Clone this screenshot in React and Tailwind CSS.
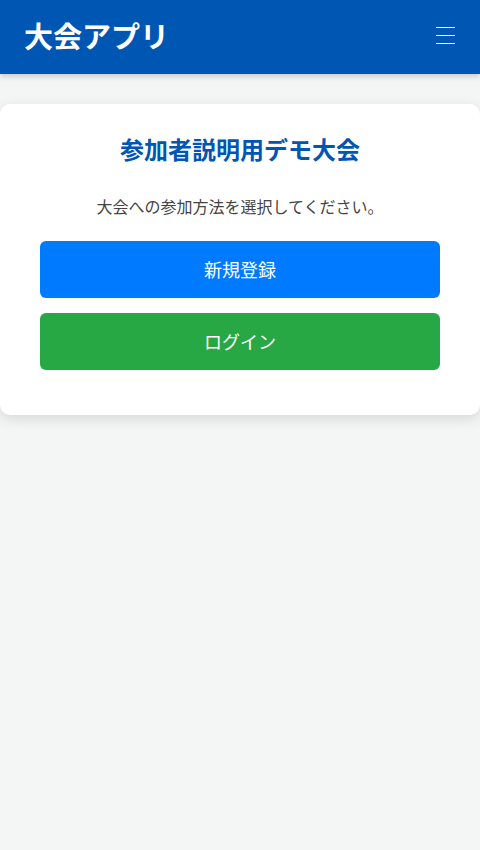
import React from "react";

const App = () => {
  return (
    <div
      className="min-h-[850px] bg-[#f4f5f5]"
      style={{ fontFamily: '"Noto Sans CJK JP", "Noto Sans", sans-serif' }}
    >
      <header className="h-[74px] bg-[#0056b3] flex items-center justify-between pl-6 pr-[25px] pb-[4px] shadow-[0_2px_6px_rgba(0,0,0,0.2)]">
        <h1 className="text-[29px] font-bold text-white leading-none">大会アプリ</h1>
        <button className="flex flex-col gap-[7px] w-[19px]">
          <span className="block h-px bg-white" />
          <span className="block h-px bg-white" />
          <span className="block h-px bg-white" />
        </button>
      </header>

      <main className="pt-[30px]">
        <div className="bg-white rounded-[10px] shadow-[0_4px_14px_rgba(0,0,0,0.12)] px-10 pt-[28px] pb-[45px]">
          <h2 className="text-center text-[24px] font-bold text-[#0056b3] leading-[34px]">
            参加者説明用デモ大会
          </h2>
          <p className="text-center text-[16px] text-[#444] mt-[28px] leading-[24px]">
            大会への参加方法を選択してください。
          </p>
          <div className="mt-[23px] flex flex-col gap-[15px]">
            <button className="h-[57px] rounded-md bg-[#007bff] text-white text-[18px]">
              新規登録
            </button>
            <button className="h-[57px] rounded-md bg-[#28a745] text-white text-[18px]">
              ログイン
            </button>
          </div>
        </div>
      </main>
    </div>
  );
};

export default App;
